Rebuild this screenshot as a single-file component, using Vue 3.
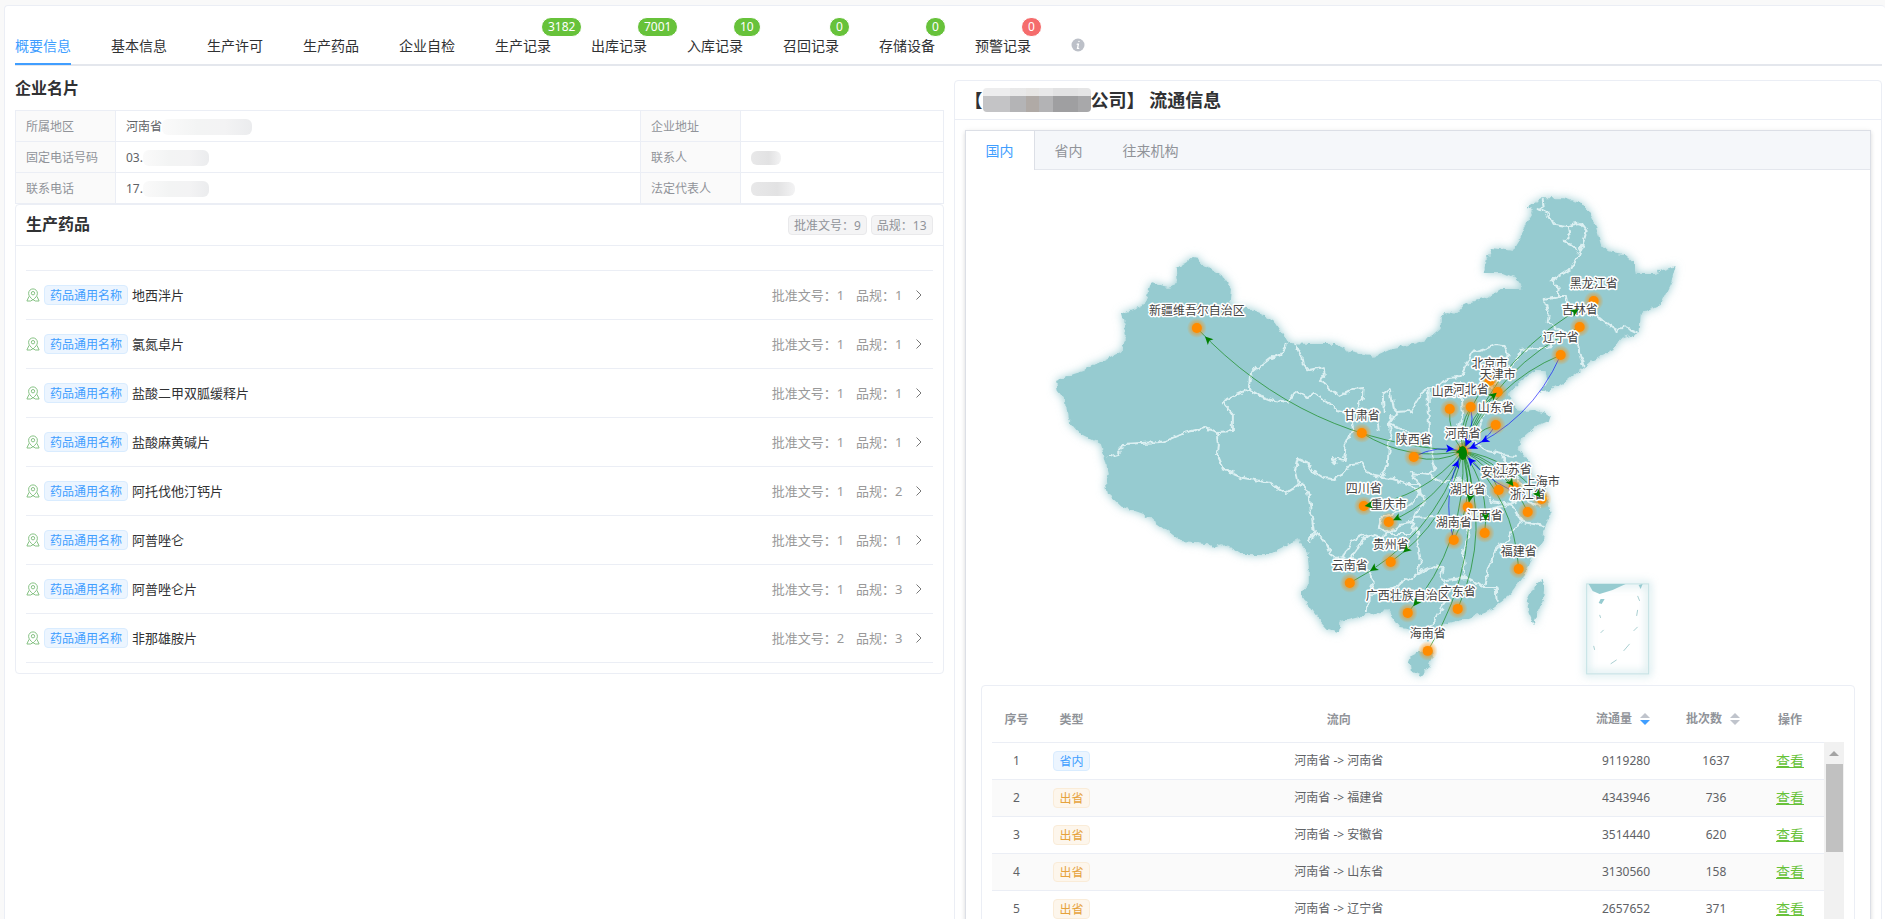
<script setup>
import { ref, computed } from 'vue';

const tabs = [
  { label: '概要信息' },
  { label: '基本信息' },
  { label: '生产许可' },
  { label: '生产药品' },
  { label: '企业自检' },
  { label: '生产记录', count: 3182 },
  { label: '出库记录', count: 7001 },
  { label: '入库记录', count: 10 },
  { label: '召回记录', count: 0 },
  { label: '存储设备', count: 0 },
  { label: '预警记录', count: 0, danger: true },
];
const activeTab = ref('概要信息');

const mapTabs = ['国内', '省内', '往来机构'];
const activeMapTab = ref('国内');

const drugs = [
  { name: '地西泮片', approvals: 1, specs: 1 },
  { name: '氯氮卓片', approvals: 1, specs: 1 },
  { name: '盐酸二甲双胍缓释片', approvals: 1, specs: 1 },
  { name: '盐酸麻黄碱片', approvals: 1, specs: 1 },
  { name: '阿托伐他汀钙片', approvals: 1, specs: 2 },
  { name: '阿普唑仑', approvals: 1, specs: 1 },
  { name: '阿普唑仑片', approvals: 1, specs: 3 },
  { name: '非那雄胺片', approvals: 2, specs: 3 },
];

const flows = [
  { type: '省内', route: '河南省 -> 河南省', amount: 9119280, batches: 1637 },
  { type: '出省', route: '河南省 -> 福建省', amount: 4343946, batches: 736 },
  { type: '出省', route: '河南省 -> 安徽省', amount: 3514440, batches: 620 },
  { type: '出省', route: '河南省 -> 山东省', amount: 3130560, batches: 158 },
  { type: '出省', route: '河南省 -> 辽宁省', amount: 2657652, batches: 371 },
];

// map nodes, later ones are drawn over earlier ones
const places = [
  { name: '黑龙江省', x: 1593, y: 300 },
  { name: '吉林省', x: 1579, y: 326 },
  { name: '辽宁省', x: 1560, y: 354 },
  { name: '北京市', x: 1489, y: 380 },
  { name: '天津市', x: 1497, y: 391 },
  { name: '山西省', x: 1449, y: 408 },
  { name: '河北省', x: 1470, y: 406 },
  { name: '山东省', x: 1495, y: 424 },
  { name: '新疆维吾尔自治区', x: 1196, y: 327 },
  { name: '甘肃省', x: 1361, y: 432 },
  { name: '陕西省', x: 1413, y: 456 },
  { name: '河南省', x: 1462, y: 450 },
  { name: '四川省', x: 1363, y: 505 },
  { name: '重庆市', x: 1388, y: 521 },
  { name: '贵州省', x: 1390, y: 561 },
  { name: '云南省', x: 1349, y: 582 },
  { name: '广东省', x: 1457, y: 608 },
  { name: '广西壮族自治区', x: 1407, y: 612 },
  { name: '海南省', x: 1427, y: 650 },
  { name: '湖北省', x: 1467, y: 506 },
  { name: '江西省', x: 1484, y: 532 },
  { name: '湖南省', x: 1453, y: 539 },
  { name: '安徽省', x: 1498, y: 489 },
  { name: '江苏省', x: 1513, y: 486 },
  { name: '上海市', x: 1541, y: 498 },
  { name: '浙江省', x: 1527, y: 511 },
  { name: '福建省', x: 1518, y: 568 },
];

// position of the moving arrow along each line, 0..1
const outArrows = {
  新疆维吾尔自治区: 0.95, 黑龙江省: 0.9, 天津市: 0.93, 四川省: 0.96, 重庆市: 0.92,
  云南省: 0.85, 贵州省: 0.86, 广西壮族自治区: 0.93, 江西省: 0.82, 湖北省: 0.85,
  江苏省: 0.93, 上海市: 0.94, 山西省: 0.04, 甘肃省: 0.03, 广东省: 0.03, 福建省: 0.02,
};
const inArrows = { 陕西省: 0.75, 湖南省: 0.85, 辽宁省: 0.83, 山东省: 0.75, 河北省: 0.8, 上海市: 0.87 };

const hub = places.find((p) => p.name === '河南省');

const curve = (a, b, t) => {
  const cx = (a.x + b.x) / 2 - (a.y - b.y) * 0.2;
  const cy = (a.y + b.y) / 2 - (b.x - a.x) * 0.2;
  const line = { d: `M${a.x},${a.y} Q${cx},${cy} ${b.x},${b.y}` };
  if (t) {
    const u = 1 - t;
    const x = u * u * a.x + 2 * u * t * cx + t * t * b.x;
    const y = u * u * a.y + 2 * u * t * cy + t * t * b.y;
    const dx = u * (cx - a.x) + t * (b.x - cx);
    const dy = u * (cy - a.y) + t * (b.y - cy);
    line.arrow = `translate(${x} ${y}) rotate(${Math.atan2(dy, dx) * 180 / Math.PI})`;
  }
  return line;
};

const outLines = computed(() => places.filter((p) => p !== hub).map((p) => curve(hub, p, outArrows[p.name])));
const inLines = computed(() => places.filter((p) => inArrows[p.name]).map((p) => curve(p, hub, inArrows[p.name])));

const mainland = 'M1055,380L1073,373L1083,370L1090,365L1107,357L1122,350L1126,335L1123,323L1120,312L1135,307L1143,304L1150,282L1167,286L1177,283L1176,267L1187,260L1192,256L1197,257L1200,263L1212,270L1223,277L1230,287L1229,300L1232,306L1247,308L1263,314L1275,322L1282,333L1287,342L1307,343L1333,343L1350,351L1373,356L1393,347L1413,343L1427,338L1440,327L1440,317L1445,311L1455,313L1463,303L1487,297L1500,288L1523,288L1515,277L1503,272L1482,272L1485,258L1492,247L1512,250L1518,240L1527,220L1532,212L1527,205L1542,197L1563,197L1580,202L1588,212L1595,225L1600,243L1607,250L1623,253L1633,262L1635,273L1653,273L1675,265L1670,283L1660,303L1640,312L1639,332L1620,338L1613,350L1597,357L1583,367L1567,380L1540,392L1547,380L1545,370L1533,370L1517,383L1507,393L1511,402L1518,411L1533,409L1550,415L1548,421L1533,427L1520,438L1518,447L1528,462L1532,477L1543,483L1547,497L1550,513L1545,523L1542,540L1533,553L1525,573L1510,593L1493,607L1467,617L1443,623L1433,628L1430,637L1425,641L1420,630L1400,627L1387,610L1367,613L1340,620L1338,632L1327,628L1317,617L1300,593L1308,583L1308,567L1307,553L1297,538L1287,543L1267,553L1240,553L1223,543L1210,548L1207,542L1180,540L1167,530L1143,513L1120,505L1107,493L1105,480L1108,473L1103,453L1100,443L1080,433L1067,418L1065,400L1057,390Z';
const taiwan = 'M1542,579L1544,585L1542,600L1533,623L1528,612L1526,600L1533,586Z';
const hainan = 'M1411,656L1419,652L1431,650L1432,656L1427,667L1420,675L1410,670L1409,661Z';

const borders = [
  // Xinjiang, Tibet, Qinghai
  'M1285,342L1282,352L1270,357L1253,370L1249,377L1248,388L1227,398L1223,402L1232,413L1232,430L1217,431',
  'M1217,431L1203,427L1183,432L1170,438L1160,441L1140,442L1123,443L1117,453L1107,456',
  'M1217,431L1218,443L1217,457L1222,468L1243,477L1270,482L1285,492L1293,487L1298,483L1295,470L1298,458L1307,462L1312,470L1323,477L1333,478L1343,473L1350,463L1360,462L1370,474L1380,476',
  'M1248,388L1260,395L1273,400L1287,402L1295,390L1307,397L1313,392L1327,402L1337,410L1350,413L1352,428L1345,443L1343,460L1332,457L1335,463',
  'M1298,483L1307,490L1310,510L1313,530L1308,541',
  // Gansu, Ningxia, Inner Mongolia
  'M1295,342L1300,353L1302,363L1308,370L1323,367L1324,373L1318,380L1330,388L1338,395L1353,388L1363,387L1362,397L1357,403L1358,408L1376,416L1378,430',
  'M1383,412L1382,393L1390,387L1391,397L1393,407L1397,411L1410,410L1420,393L1428,387L1437,387L1447,377L1460,376L1467,360L1470,352L1480,350L1495,344L1503,345L1507,354L1503,367',
  'M1391,415L1389,422L1390,430L1388,447L1387,463L1380,477L1393,478L1407,483L1418,483L1410,472L1427,474',
  'M1397,411L1389,422L1404,430L1410,434',
  'M1428,388L1428,430L1430,453L1434,469L1427,474L1442,482L1460,478L1470,484L1483,487',
  // North and northeast
  'M1542,198L1543,205L1538,208L1548,213L1553,223L1567,225L1580,222L1586,230L1582,243L1577,255L1570,268L1550,280L1558,287L1557,295L1543,298L1548,313L1547,322L1560,330L1547,347L1533,347L1520,349L1518,357L1507,366',
  'M1567,225L1569,235L1563,240L1570,243L1577,249',
  'M1557,295L1565,295L1567,305L1587,310L1600,317L1607,323L1617,330L1623,325L1638,332',
  'M1560,330L1577,343L1580,357L1583,366',
  'M1460,380L1462,410L1457,427L1460,440L1468,437L1478,428L1484,411L1498,402L1510,398',
  'M1481,374L1492,368L1499,377L1490,386L1481,383Z',
  'M1468,437L1487,450L1500,453L1515,455',
  // Sichuan, Chongqing, Yunnan, Guizhou
  'M1407,483L1425,497L1417,510L1412,517L1413,527L1418,533',
  'M1418,483L1420,493L1413,500L1400,510L1380,517L1378,527L1387,533L1400,523L1413,520',
  'M1308,541L1315,532L1323,538L1330,553L1337,558L1343,557L1350,540L1360,535L1367,533L1357,547L1350,557L1367,570L1373,580L1368,595L1367,612',
  'M1367,533L1380,537L1387,533L1407,533L1415,527L1417,543L1420,560L1418,572L1405,580L1387,590L1368,595',
  // South and east
  'M1418,572L1433,565L1443,567L1440,580L1453,578L1467,577L1478,583L1483,587L1495,587L1496,602',
  'M1443,580L1447,597L1440,607L1433,620L1428,628',
  'M1483,587L1487,570L1493,553L1500,543L1507,540L1510,533L1520,520L1515,510L1510,503L1493,507L1470,517L1467,537L1462,553L1464,577',
  'M1520,520L1532,523L1543,525',
  'M1483,487L1490,500L1510,503L1520,497L1525,488L1547,497',
  'M1500,453L1507,463L1517,477L1523,487L1527,500L1540,505',
  'M1412,517L1433,516L1450,521L1470,517',
];
</script>

<template>
  <div class="page">
    <div class="main-card">
      <nav class="tabs">
        <button
          v-for="t in tabs"
          :key="t.label"
          type="button"
          class="tab"
          :class="{ active: activeTab === t.label }"
          @click="activeTab = t.label"
        >
          {{ t.label }}
          <sup v-if="t.count !== undefined" class="badge" :class="{ danger: t.danger }">{{ t.count }}</sup>
        </button>
        <svg class="info-icon" viewBox="0 0 14 14" aria-hidden="true">
          <circle cx="7" cy="7" r="6.5" fill="#bcc0c8" />
          <path d="M7.9 3.4h.1M6.2 6.2h1.2L6.5 10.4h1.2" fill="none" stroke="#fff" stroke-width="1.3" stroke-linecap="round" />
        </svg>
      </nav>

      <div class="columns">
        <section class="left">
          <h2 class="section-title">企业名片</h2>
          <table class="info-table">
            <colgroup>
              <col class="c-label" /><col class="c-wide" /><col class="c-label" /><col />
            </colgroup>
            <tbody>
              <tr>
                <th scope="row">所属地区</th>
                <td><div class="cell">河南省<span class="mask w90"></span></div></td>
                <th scope="row">企业地址</th>
                <td></td>
              </tr>
              <tr>
                <th scope="row">固定电话号码</th>
                <td><div class="cell">03.<span class="mask w66"></span></div></td>
                <th scope="row">联系人</th>
                <td><div class="cell"><span class="mask dark w30"></span></div></td>
              </tr>
              <tr>
                <th scope="row">联系电话</th>
                <td><div class="cell">17.<span class="mask w66"></span></div></td>
                <th scope="row">法定代表人</th>
                <td><div class="cell"><span class="mask dark w44"></span></div></td>
              </tr>
            </tbody>
          </table>

          <div class="drug-card">
            <div class="drug-header">
              <h2>生产药品</h2>
              <div class="chips">
                <span class="tag info">批准文号：9</span>
                <span class="tag info">品规：13</span>
              </div>
            </div>
            <div class="drug-list">
              <button v-for="d in drugs" :key="d.name" type="button" class="drug-row">
                <svg class="place-icon" viewBox="0 0 14 14" aria-hidden="true">
                  <path d="M7 12C4.6 9.6 2.6 8 2.6 5.3a4.4 4.4 0 0 1 8.8 0C11.4 8 9.4 9.6 7 12Z" />
                  <circle cx="7" cy="5.2" r="1.7" />
                  <path d="M3 8.4L.9 13h3.8L7 11.6L9.3 13h3.8L11 8.4" />
                </svg>
                <span class="tag primary">药品通用名称</span>
                <span class="drug-name">{{ d.name }}</span>
                <span class="drug-count">批准文号：{{ d.approvals }}</span>
                <span class="drug-count">品规：{{ d.specs }}</span>
                <svg class="chevron" viewBox="0 0 8 12" aria-hidden="true"><path d="M1.5 1.5L6 6L1.5 10.5" /></svg>
              </button>
            </div>
          </div>
        </section>

        <section class="flow-card">
          <h2 class="flow-title">【<span class="title-mask"></span>公司】 流通信息</h2>
          <div class="flow-body">
            <div class="map-box">
              <div class="map-tabs">
                <button
                  v-for="m in mapTabs"
                  :key="m"
                  type="button"
                  class="map-tab"
                  :class="{ active: activeMapTab === m }"
                  @click="activeMapTab = m"
                >{{ m }}</button>
              </div>

              <svg class="map" viewBox="965 169 905 515" role="img" aria-label="流通地图">
                <defs>
                  <!-- roughens the coast and adds the outer glow -->
                  <filter id="land" x="-10%" y="-10%" width="120%" height="120%">
                    <feTurbulence type="fractalNoise" baseFrequency="0.14" numOctaves="2" seed="4" result="noise" />
                    <feDisplacementMap in="SourceGraphic" in2="noise" scale="7" xChannelSelector="R" yChannelSelector="G" result="rough" />
                    <feGaussianBlur in="rough" stdDeviation="5" result="glow" />
                    <feMerge>
                      <feMergeNode in="glow" />
                      <feMergeNode in="rough" />
                    </feMerge>
                  </filter>
                  <filter id="inset" x="-30%" y="-30%" width="160%" height="160%">
                    <feGaussianBlur stdDeviation="4" />
                  </filter>
                  <radialGradient id="halo">
                    <stop offset="0.5" stop-color="#ff8c00" stop-opacity="0.5" />
                    <stop offset="1" stop-color="#ff8c00" stop-opacity="0" />
                  </radialGradient>
                </defs>

                <g filter="url(#land)">
                  <path :d="mainland" class="land" />
                  <path :d="taiwan" class="land" />
                  <path :d="hainan" class="land" />
                  <path v-for="b in borders" :key="b" :d="b" class="border" />
                </g>

                <g class="sea">
                  <rect x="1586" y="583" width="62" height="90" filter="url(#inset)" class="sea-glow" />
                  <rect x="1586" y="583" width="62" height="90" class="sea-frame" />
                  <path d="M1588,583H1625L1612,589L1599,593L1592,590Z" />
                  <path d="M1598,602L1600,598L1604,598L1601,603ZM1638,584L1642,583L1640,588Z" />
                  <path d="M1637,595L1639,600M1636,615L1637,609M1633,630L1637,626M1623,650L1629,643M1599,614L1600,617M1600,632L1603,629M1593,645L1594,649M1610,663L1616,659" class="dash" />
                </g>

                <g class="out">
                  <path v-for="l in outLines" :key="l.d" :d="l.d" class="line" />
                </g>
                <g class="in">
                  <path v-for="l in inLines" :key="l.d" :d="l.d" class="line" />
                </g>
                <g v-for="p in places" :key="p.name">
                  <circle :cx="p.x" :cy="p.y" r="10" fill="url(#halo)" />
                  <circle :cx="p.x" :cy="p.y" r="5" class="dot" />
                </g>
                <ellipse :cx="hub.x" :cy="hub.y + 2" rx="4" ry="7" class="hub" />
                <text v-for="p in places" :key="p.name" :x="p.x" :y="p.y - 13" class="place">{{ p.name }}</text>
                <g class="out">
                  <template v-for="l in outLines" :key="l.d">
                    <path v-if="l.arrow" :transform="l.arrow" d="M4,0L-4,4L-2,0L-4,-4Z" class="arrow" />
                  </template>
                </g>
                <g class="in">
                  <path v-for="l in inLines" :key="l.d" :transform="l.arrow" d="M4,0L-4,4L-2,0L-4,-4Z" class="arrow" />
                </g>
              </svg>

              <div class="table-card">
                <table class="flow-table">
                  <colgroup>
                    <col class="c50" /><col class="c60" /><col /><col class="c100" /><col class="c80" /><col class="c68" />
                  </colgroup>
                  <thead>
                    <tr>
                      <th scope="col">序号</th>
                      <th scope="col">类型</th>
                      <th scope="col">流向</th>
                      <th scope="col">
                        <button type="button" class="sort">
                          流通量
                          <svg viewBox="0 0 10 12" aria-hidden="true"><path d="M0 5L5 0L10 5Z" /><path class="on" d="M0 7H10L5 12Z" /></svg>
                        </button>
                      </th>
                      <th scope="col">
                        <button type="button" class="sort">
                          批次数
                          <svg viewBox="0 0 10 12" aria-hidden="true"><path d="M0 5L5 0L10 5Z" /><path d="M0 7H10L5 12Z" /></svg>
                        </button>
                      </th>
                      <th scope="col">操作</th>
                    </tr>
                  </thead>
                  <tbody>
                    <tr v-for="(f, i) in flows" :key="f.route">
                      <td>{{ i + 1 }}</td>
                      <td><span class="tag" :class="f.type === '省内' ? 'primary' : 'warning'">{{ f.type }}</span></td>
                      <td>{{ f.route }}</td>
                      <td>{{ f.amount }}</td>
                      <td>{{ f.batches }}</td>
                      <td><a href="#" class="view" @click.prevent>查看</a></td>
                    </tr>
                  </tbody>
                </table>
                <div class="scrollbar">
                  <svg viewBox="0 0 10 6" aria-hidden="true"><path d="M0 6L5 1L10 6Z" /></svg>
                  <div class="thumb"></div>
                </div>
              </div>
            </div>
          </div>
        </section>
      </div>
    </div>
  </div>
</template>

<style>
body {
  margin: 0;
  background: #f9f9f9;
}
</style>

<style scoped>
* { box-sizing: border-box; }

.page {
  height: 100vh;
  padding: 5px 0 0 4px;
  overflow: hidden;
  font-family: "Noto Sans", "Noto Sans CJK SC", sans-serif;
  font-size: 12px;
  line-height: 20px;
  color: #606266;
}

button {
  padding: 0;
  border: none;
  background: none;
  font: inherit;
  color: inherit;
  cursor: pointer;
}

h2 { margin: 0; color: #303133; }

.main-card {
  min-height: 100%;
  padding: 20px 3px 0 10px;
  border: 1px solid #ebeef5;
  border-right: none;
  border-radius: 4px;
  background: #fff;
}

/* Top tabs */
.tabs {
  display: flex;
  align-items: center;
  gap: 40px;
  height: 40px;
  border-bottom: 2px solid #e4e7ed;
}

.tab {
  position: relative;
  height: 40px;
  padding-top: 4px;
  border-bottom: 2px solid transparent;
  font-size: 14px;
  color: #303133;
}

.tab.active {
  border-bottom-color: #409eff;
  color: #409eff;
}

.badge {
  position: absolute;
  top: -8px;
  left: calc(100% - 10px);
  height: 20px;
  padding: 0 6px;
  border: 1px solid #fff;
  border-radius: 10px;
  background: #67c23a;
  color: #fff;
  font-size: 12px;
  line-height: 18px;
}

.badge.danger { background: #f56c6c; }

.info-icon { width: 14px; height: 14px; }

/* Columns */
.columns {
  display: grid;
  grid-template-columns: 1fr 1fr;
  gap: 10px;
  align-items: start;
}

.section-title {
  font-size: 16px;
  line-height: 44px;
}

.info-table {
  width: 100%;
  border-collapse: collapse;
  table-layout: fixed;
}

.info-table .c-label { width: 100px; }
.info-table .c-wide { width: 525px; }

.info-table th,
.info-table td {
  height: 31px;
  padding: 2px 10px 0;
  border: 1px solid #ebeef5;
  text-align: left;
}

.info-table th {
  background: #fafafa;
  color: #909399;
  font-weight: 400;
}

.cell { display: flex; align-items: center; }

.mask {
  height: 16px;
  border-radius: 6px;
  background: linear-gradient(90deg, #fafafa, #f3f4f4 40%, #f3f3f4 70%, #ebecee);
}

.mask.dark {
  height: 14px;
  background: linear-gradient(90deg, #e8e8e9, #e2e2e3 60%, #f3f3f4);
}

.w30 { width: 30px; }
.w44 { width: 44px; }
.w66 { width: 66px; }
.w90 { width: 90px; }

/* Drug list */
.drug-card {
  border: 1px solid #ebeef5;
  border-radius: 4px;
}

.drug-header {
  display: flex;
  align-items: center;
  justify-content: space-between;
  height: 41px;
  padding: 0 10px;
  border-bottom: 1px solid #ebeef5;
}

.drug-header h2 {
  padding-bottom: 3px;
  font-size: 16px;
}

.chips { display: flex; gap: 4px; }

.tag {
  display: inline-block;
  height: 20px;
  padding: 0 5px;
  border: 1px solid;
  border-radius: 4px;
  font-size: 12px;
  line-height: 19px;
  white-space: nowrap;
}

.tag.info { border-color: #e9e9eb; background: #f4f4f5; color: #909399; }
.tag.primary { border-color: #d9ecff; background: #ecf5ff; color: #409eff; }
.tag.warning { border-color: #faecd8; background: #fdf6ec; color: #e6a23c; }

.drug-list {
  margin: 24px 10px 10px;
  border-top: 1px solid #ebeef5;
}

.drug-row {
  display: flex;
  align-items: center;
  width: 100%;
  height: 49px;
  padding-right: 10px;
  border-bottom: 1px solid #ebeef5;
  font-size: 13px;
}

.place-icon {
  width: 14px;
  height: 14px;
  margin-right: 4px;
  fill: none;
  stroke: #86c284;
}

.drug-name {
  margin-left: 4px;
  margin-right: auto;
  color: #303133;
}

.drug-count {
  margin-right: 12px;
  color: #999;
}

.chevron {
  width: 8px;
  height: 12px;
  fill: none;
  stroke: #777;
}

/* Flow card */
.flow-card {
  margin-top: 14px;
  border: 1px solid #ebeef5;
  border-radius: 4px;
}

.flow-title {
  display: flex;
  align-items: center;
  height: 39px;
  padding: 0 10px;
  border-bottom: 1px solid #ebeef5;
  font-size: 18px;
  white-space: pre;
}

.title-mask {
  width: 108px;
  height: 24px;
  border-radius: 4px;
  background:
    linear-gradient(rgba(255, 255, 255, 0.7) 8px, transparent 8px),
    linear-gradient(90deg, #c4c4c6 25%, #b4b4b6 25% 40%, #b0aaa6 40% 52%, #b3b3b5 52% 65%, #9f9fa1 65% 88%, #a8a8aa 88%);
}

.flow-body { padding: 10px; }

.map-box {
  border: 1px solid #dcdfe6;
  box-shadow: 0 2px 4px rgba(0, 0, 0, 0.12), 0 0 6px rgba(0, 0, 0, 0.04);
}

.map-tabs {
  display: flex;
  height: 39px;
  border-bottom: 1px solid #e4e7ed;
  background: #f5f7fa;
}

.map-tab {
  height: 39px;
  padding: 0 20px;
  font-size: 14px;
  color: #909399;
}

.map-tab.active {
  border-right: 1px solid #dcdfe6;
  background: #fff;
  color: #409eff;
}

.map {
  display: block;
  width: 100%;
  height: 515px;
}

.land { fill: #96cbd0; }
.border { fill: none; stroke: #dcf0f2; stroke-width: 2; stroke-linejoin: round; }
.sea { fill: #96cbd0; }
.sea-glow { fill: none; stroke: #96cbd0; stroke-width: 3; stroke-opacity: 0.7; }
.sea-frame { fill: none; stroke: #c5e2e4; }
.dash { fill: none; stroke: #a9cfd1; }
.dot { fill: #ff8c00; }
.hub { fill: green; }
.line { fill: none; stroke-width: 1; stroke-opacity: 0.6; }
.out .line { stroke: green; }
.in .line { stroke: blue; }
.out .arrow { fill: green; }
.in .arrow { fill: blue; }

.place {
  font-size: 12px;
  text-anchor: middle;
  fill: #444;
  stroke: #fff;
  stroke-width: 3px;
  stroke-linejoin: round;
  paint-order: stroke;
}

/* Flow table */
.table-card {
  display: flex;
  margin: 0 15px 15px;
  padding: 10px;
  border: 1px solid #ebeef5;
  border-radius: 4px;
}

.flow-table {
  flex: 1;
  width: 0;
  border-collapse: collapse;
  table-layout: fixed;
  text-align: center;
}

.c50 { width: 50px; }
.c60 { width: 60px; }
.c68 { width: 68px; }
.c80 { width: 80px; }
.c100 { width: 100px; }

.flow-table th {
  height: 46px;
  padding: 2px 0 0;
  border-bottom: 1px solid #ebeef5;
  color: #909399;
}

.flow-table td {
  height: 37px;
  padding: 1px 0 0;
  border-bottom: 1px solid #ebeef5;
}

.flow-table tbody tr:nth-child(even) { background: #fafafa; }

.sort {
  display: inline-flex;
  align-items: center;
  gap: 8px;
  padding: 0 6px 2px 0;
}

.sort svg { width: 10px; height: 12px; fill: #c0c4cc; }
.sort .on { fill: #409eff; }

.view {
  color: #67c23a;
  font-size: 14px;
  text-decoration: underline;
}

.scrollbar {
  display: flex;
  flex-direction: column;
  align-items: center;
  width: 20px;
  margin-top: 46px;
  background: #f1f1f1;
}

.scrollbar svg {
  width: 10px;
  height: 6px;
  margin: 8px 0;
  fill: #a3a3a3;
}

.thumb {
  width: 17px;
  height: 88px;
  background: #c1c1c1;
}
</style>
